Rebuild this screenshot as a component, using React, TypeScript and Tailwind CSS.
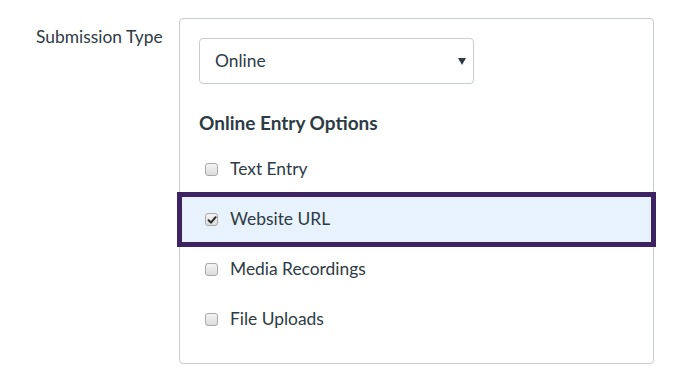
import React from "react";

function Box({ checked }: { checked?: boolean }) {
  return (
    <span className="relative flex h-[13px] w-[13px] shrink-0 items-center justify-center rounded-[3px] border border-[#a9a9a9] bg-gradient-to-b from-[#f4f4f4] to-[#dcdcdc]">
      {checked && (
        <svg width="10" height="10" viewBox="0 0 10 10" className="absolute">
          <path d="M1.6 5.2 L4 7.6 L8.6 2.2" fill="none" stroke="#2b2b2b" strokeWidth="2" strokeLinecap="round" strokeLinejoin="round" />
        </svg>
      )}
    </span>
  );
}

const options = [
  { label: "Text Entry", checked: false },
  { label: "Website URL", checked: true },
  { label: "Media Recordings", checked: false },
  { label: "File Uploads", checked: false },
];

export default function App() {
  return (
    <div
      className="flex h-[384px] w-[673px] bg-white text-[#2d3b45]"
      style={{ fontFamily: "Lato, 'Open Sans', sans-serif" }}
    >
      <div className="w-[179px] shrink-0 pl-[36px] pt-[25px] text-[17.4px] leading-[24px]">
        Submission Type
      </div>
      <div className="mt-[18px] h-[346px] w-[475px] rounded-[4px] border border-[#c7cdd1] px-[19px] pt-[19px]">
        <div className="relative flex h-[46px] w-[275px] items-center rounded-[4px] border border-[#c7cdd1] pl-[15px] text-[17.4px]">
          Online
          <svg width="8" height="7" viewBox="0 0 8 7" className="absolute left-[258px] top-[19px]">
            <path d="M0 0 H8 L4 7 Z" fill="#2d3b45" />
          </svg>
        </div>
        <div className="mt-[28px] text-[19px] font-bold leading-[22px]">Online Entry Options</div>
        <div className="-mx-[17px] mt-[13px] flex flex-col gap-[5px]">
          {options.map((o) => (
            <div
              key={o.label}
              className={
                "flex h-[45px] items-center gap-[12px] pl-[23px] text-[17.4px] " +
                (o.checked ? "bg-[#e8f2fd] outline outline-[5px] outline-[#3e2363]" : "")
              }
            >
              <Box checked={o.checked} />
              <span>{o.label}</span>
            </div>
          ))}
        </div>
      </div>
    </div>
  );
}
